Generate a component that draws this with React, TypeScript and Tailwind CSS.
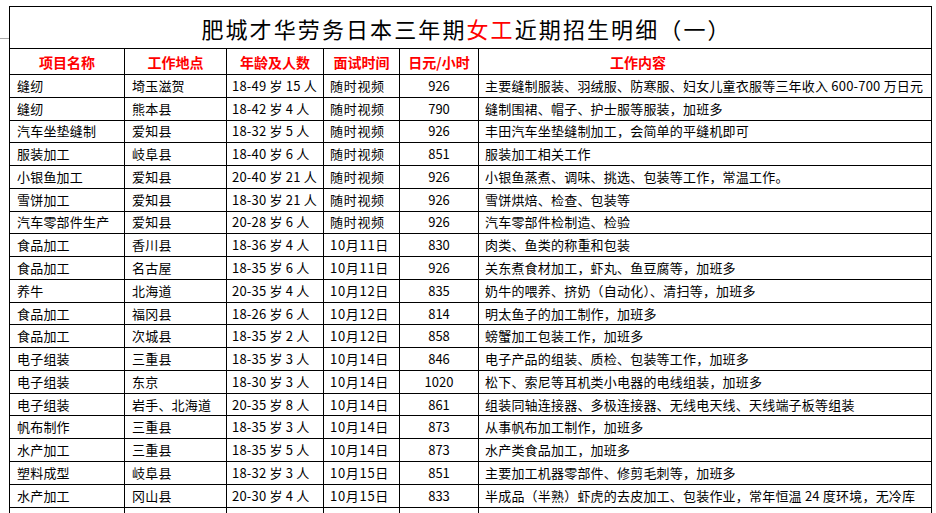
import React from 'react';

type Row = [string, string, string, string, string, string];

const rows: Row[] = [
  ['缝纫', '埼玉滋贺', '18-49 岁 15 人', '随时视频', '926', '主要缝制服装、羽绒服、防寒服、妇女儿童衣服等三年收入 600-700 万日元'],
  ['缝纫', '熊本县', '18-42 岁 4 人', '随时视频', '790', '缝制围裙、帽子、护士服等服装，加班多'],
  ['汽车坐垫缝制', '爱知县', '18-32 岁 5 人', '随时视频', '926', '丰田汽车坐垫缝制加工，会简单的平缝机即可'],
  ['服装加工', '岐阜县', '18-40 岁 6 人', '随时视频', '851', '服装加工相关工作'],
  ['小银鱼加工', '爱知县', '20-40 岁 21 人', '随时视频', '926', '小银鱼蒸煮、调味、挑选、包装等工作，常温工作。'],
  ['雪饼加工', '爱知县', '18-30 岁 21 人', '随时视频', '926', '雪饼烘焙、检查、包装等'],
  ['汽车零部件生产', '爱知县', '20-28 岁 6 人', '随时视频', '926', '汽车零部件检制造、检验'],
  ['食品加工', '香川县', '18-36 岁 4 人', '10月11日', '830', '肉类、鱼类的称重和包装'],
  ['食品加工', '名古屋', '18-35 岁 6 人', '10月11日', '926', '关东煮食材加工，虾丸、鱼豆腐等，加班多'],
  ['养牛', '北海道', '20-35 岁 4 人', '10月12日', '835', '奶牛的喂养、挤奶（自动化）、清扫等，加班多'],
  ['食品加工', '福冈县', '18-26 岁 6 人', '10月12日', '814', '明太鱼子的加工制作，加班多'],
  ['食品加工', '次城县', '18-35 岁 2 人', '10月12日', '858', '螃蟹加工包装工作，加班多'],
  ['电子组装', '三重县', '18-35 岁 3 人', '10月14日', '846', '电子产品的组装、质检、包装等工作，加班多'],
  ['电子组装', '东京', '18-30 岁 3 人', '10月14日', '1020', '松下、索尼等耳机类小电器的电线组装，加班多'],
  ['电子组装', '岩手、北海道', '20-35 岁 8 人', '10月14日', '861', '组装同轴连接器、多极连接器、无线电天线、天线端子板等组装'],
  ['帆布制作', '三重县', '18-35 岁 3 人', '10月14日', '873', '从事帆布加工制作，加班多'],
  ['水产加工', '三重县', '18-35 岁 5 人', '10月14日', '873', '水产类食品加工，加班多'],
  ['塑料成型', '岐阜县', '18-32 岁 3 人', '10月15日', '851', '主要加工机器零部件、修剪毛刺等，加班多'],
  ['水产加工', '冈山县', '20-30 岁 4 人', '10月15日', '833', '半成品（半熟）虾虎的去皮加工、包装作业，常年恒温 24 度环境，无冷库'],
  ['', '', '', '', '', ''],
];

const headers = ['项目名称', '工作地点', '年龄及人数', '面试时间', '日元/小时'];

// per-column alignment / spacing of body cells
const cols = [
  'pl-[7px] tracking-[0.2px]',
  'pl-[7px] tracking-[0.2px]',
  'pl-[5px] tracking-[0.2px]',
  'pl-[6px] tracking-[0.7px]',
  'justify-center',
  'pl-[6px] tracking-[0.2px]',
];

export default function App() {
  return (
    <div className="flex h-[513px] w-[936px] overflow-hidden bg-white font-['Noto_Sans_CJK_SC',sans-serif] text-black">
      {/* gutter with the little grey sheet edge */}
      <div className="w-[9px] shrink-0">
        <div className="mt-[38px] h-px bg-[#a8a8a8]" />
      </div>

      <div className="mt-[6px] grid w-[923px] shrink-0 grid-cols-[115px_102px_97px_76px_79px_453px] grid-rows-[42px_26px] auto-rows-[22.77px] self-start border-l border-t border-black">
        <div className="col-span-6 flex items-center justify-center border-b border-r border-black pr-[8px] text-[22px] leading-none tracking-[2.1px]">
          <span>肥城才华劳务日本三年期</span>
          <span className="text-[#ff0000]">女工</span>
          <span>近期招生明细（一）</span>
        </div>

        {headers.map(h => (
          <div
            key={h}
            className="flex items-center justify-center border-b border-r border-black text-[14px] font-bold leading-none text-[#ff0000]"
          >
            {h}
          </div>
        ))}
        <div className="flex items-center border-b border-r border-black pl-[131px] text-[14px] font-bold leading-none text-[#ff0000]">
          工作内容
        </div>

        {rows.map((row, i) =>
          row.map((cell, j) => (
            <div
              key={`${i}-${j}`}
              className={`flex items-center overflow-hidden whitespace-nowrap border-b border-r border-black pb-px text-[13px] leading-none ${cols[j]}`}
            >
              {cell}
            </div>
          ))
        )}
      </div>
    </div>
  );
}
